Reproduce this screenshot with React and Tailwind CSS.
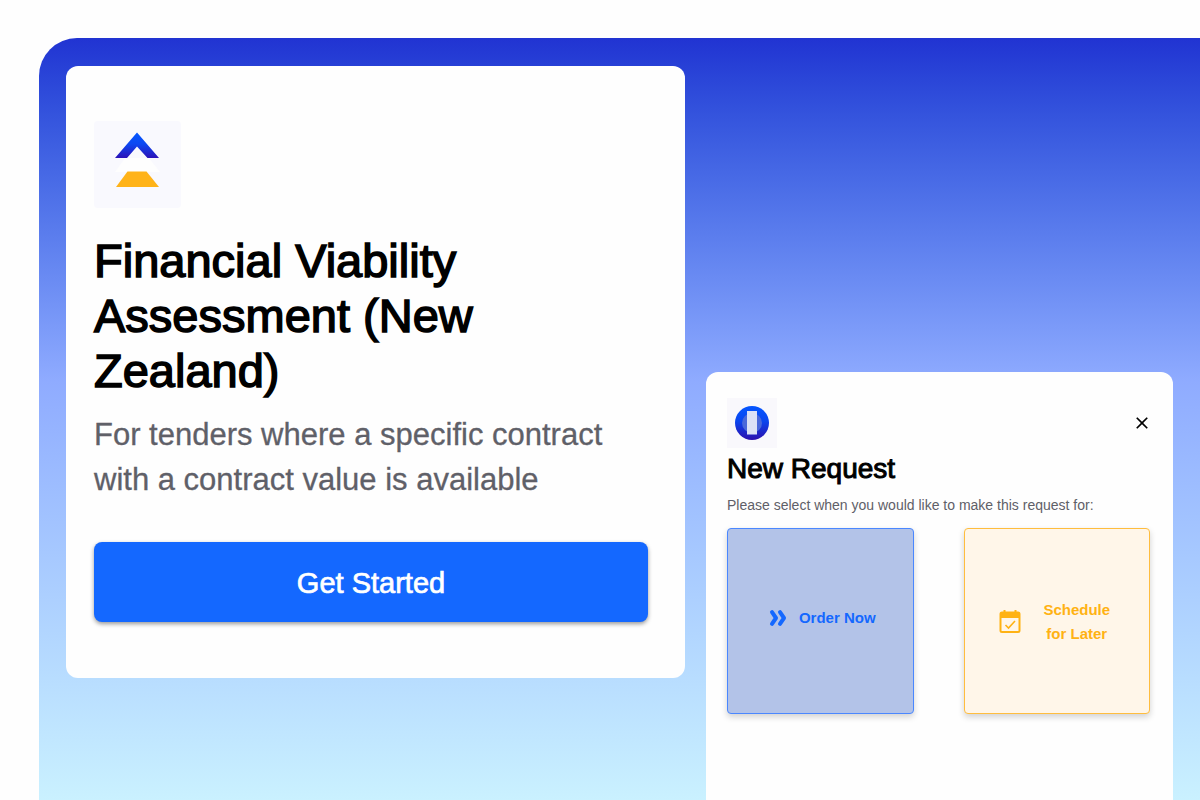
import React from "react";
import { MdClose } from "react-icons/md";

function App() {
  return (
    <div className="h-screen overflow-hidden bg-[#fefefe] pt-[38px] pl-[39px] font-['Liberation_Sans',Arial,sans-serif]">
      <main className="grid h-full grid-cols-[57fr_43fr] gap-[21px] rounded-tl-[38px] bg-linear-to-b from-[#2133d2] via-[#8fabff] via-45% to-[#caf1ff] px-[27px] pt-7">
        <ProductCard />
        <RequestCard />
      </main>
    </div>
  );
}

function ProductCard() {
  return (
    <section className="self-start rounded-xl bg-[#fefefe] pt-[55px] pr-[37px] pb-14 pl-7">
      <div className="h-[87px] w-[87px] rounded-sm bg-[#f9f9fe]">
        <ProductLogo />
      </div>
      <h1 className="mt-[25px] max-w-[420px] text-[47px] leading-[55px] text-black [-webkit-text-stroke:1.5px_black]">
        Financial Viability Assessment (New Zealand)
      </h1>
      <p className="mt-[14px] text-[31px] leading-[45px] text-[#5f6068] [-webkit-text-stroke:0.3px_#5f6068]">
        For tenders where a specific contract with a contract value is available
      </p>
      <button
        type="button"
        className="mt-10 h-20 w-full rounded-lg bg-[#1468ff] pt-1 text-[29px] text-white shadow-[0_2px_4px_rgba(0,0,0,0.4)] [-webkit-text-stroke:0.7px_white]"
      >
        Get Started
      </button>
    </section>
  );
}

function RequestCard() {
  return (
    <section className="mt-[306px] rounded-t-xl bg-[#fefefe] pt-[26px] pr-[23px] pl-[21px]">
      <div className="flex items-center justify-between">
        <div className="h-[50px] w-[50px] bg-[#f9f8fc]">
          <RequestLogo />
        </div>
        <button type="button" aria-label="Close" className="-mr-0.5 text-black">
          <MdClose size={20} />
        </button>
      </div>
      <h2 className="mt-[3px] text-[28px] leading-9 text-black [-webkit-text-stroke:1px_black]">
        New Request
      </h2>
      <p className="mt-2 text-sm leading-5 text-[#5f6068]">
        Please select when you would like to make this request for:
      </p>
      <div className="mt-[13px] grid grid-cols-2 gap-[50px]">
        <button
          type="button"
          className="flex aspect-square items-center justify-center gap-3 rounded-sm border border-[#4a87ff] bg-[#b3c3e8] pb-1.5 pl-1 text-[15px] font-bold text-[#1468ff] shadow-[0_3px_6px_rgba(0,0,0,0.18)]"
        >
          <DoubleArrow />
          Order Now
        </button>
        <button
          type="button"
          className="flex aspect-square items-center justify-center gap-5 rounded-sm border border-[#ffbd3e] bg-[#fff6e9] pt-0.5 pr-1 text-[15px] leading-6 font-bold text-[#ffb213] shadow-[0_3px_6px_rgba(0,0,0,0.18)]"
        >
          <CalendarCheck />
          <span className="w-[70px]">Schedule for Later</span>
        </button>
      </div>
    </section>
  );
}

function ProductLogo() {
  return (
    <svg viewBox="0 0 87 87" className="h-full w-full" aria-hidden="true">
      <defs>
        <linearGradient id="roof" x1="0" y1="0" x2="0" y2="1">
          <stop offset="0" stopColor="#0458ff" />
          <stop offset="0.45" stopColor="#0d48f2" />
          <stop offset="1" stopColor="#2c12b8" />
        </linearGradient>
      </defs>
      <path d="M31 37h24l11 14H21z" fill="#fefefe" />
      <path d="M43 11.500 65 37H53.500L43 25.500 33 37H21z" fill="url(#roof)" />
      <path d="M33.500 50.500H52.500L65 66H22z" fill="#ffb319" />
    </svg>
  );
}

function RequestLogo() {
  return (
    <svg viewBox="0 0 50 50" className="h-full w-full" aria-hidden="true">
      <defs>
        <linearGradient id="disc" x1="0" y1="0" x2="0" y2="1">
          <stop offset="0" stopColor="#0556ff" />
          <stop offset="0.45" stopColor="#0a45ee" />
          <stop offset="1" stopColor="#2c0fae" />
        </linearGradient>
      </defs>
      <circle cx="25" cy="25" r="17" fill="url(#disc)" />
      <circle cx="25" cy="25" r="10" fill="#4968da" />
      <path d="M20 13h10v23.500H20z" fill="#dbe1f6" />
    </svg>
  );
}

function DoubleArrow() {
  return (
    <svg
      viewBox="0 0 18 18"
      className="h-[18px] w-[18px]"
      fill="none"
      stroke="currentColor"
      strokeWidth="4"
      strokeLinecap="round"
      strokeLinejoin="round"
      aria-hidden="true"
    >
      <path d="M3 3.200 7 9 3 14.800M11 3.200 15 9 11 14.800" />
    </svg>
  );
}

function CalendarCheck() {
  return (
    <svg
      viewBox="0 0 24 24"
      className="h-6 w-6"
      fill="none"
      stroke="currentColor"
      strokeWidth="2"
      aria-hidden="true"
    >
      <rect x="2.500" y="2.500" width="19" height="19.500" rx="1.500" />
      <path d="M2 2.500h20v5.500H2z" fill="currentColor" stroke="none" />
      <path d="M6.500 0v3M17.500 0v3" />
      <path d="m7.500 15 3 3 6.500-7" strokeWidth="1.600" />
    </svg>
  );
}

export default App;
